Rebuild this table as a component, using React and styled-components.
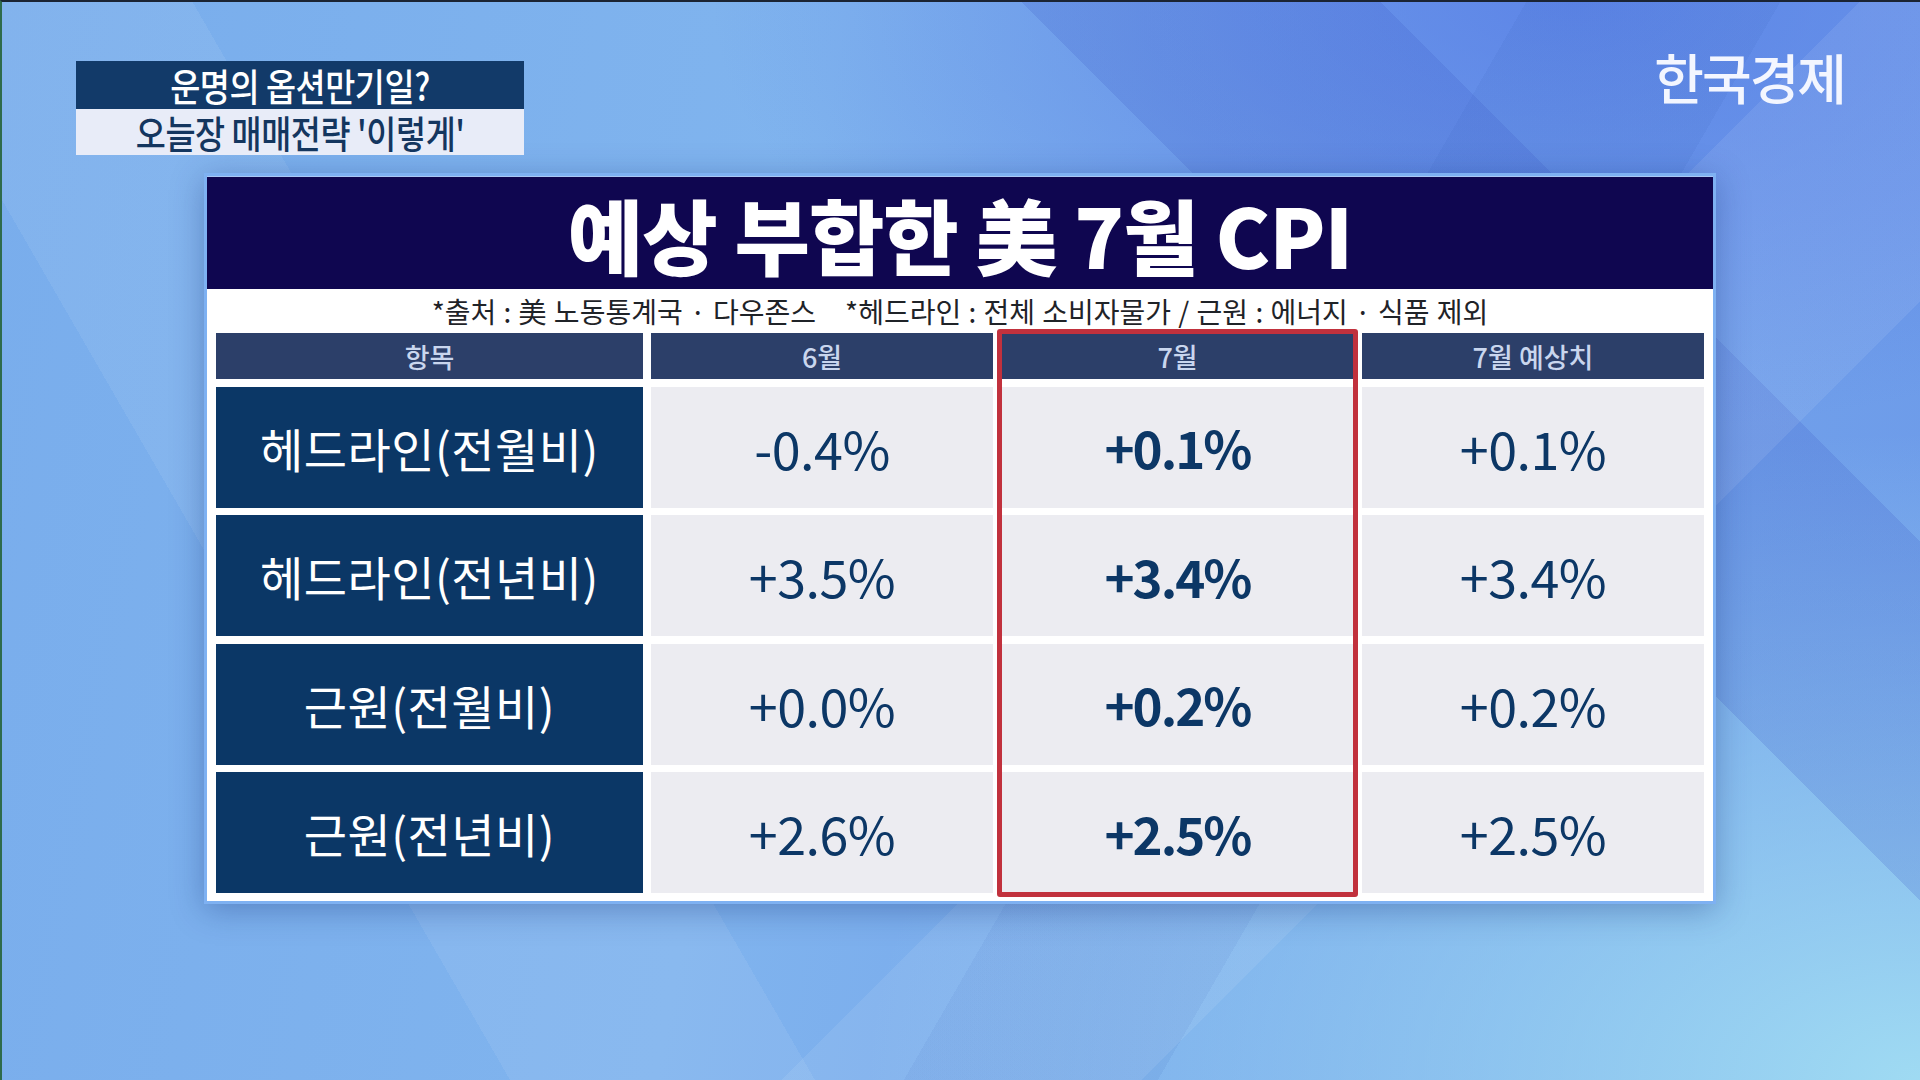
import React from "react";
import styled, { createGlobalStyle } from "styled-components";

const GlobalStyle = createGlobalStyle`
  html, body {
    margin: 0;
    padding: 0;
  }
  body {
    font-family: "Noto Sans CJK KR", "Noto Sans", sans-serif;
  }
`;

const Page = styled.div`
  box-sizing: border-box;
  width: 1920px;
  height: 1080px;
  overflow: hidden;
  padding-top: 59px;
  border-top: 2px solid #1b2433;
  border-left: 2px solid #2e6b4c;
  background:
    linear-gradient(135deg, transparent 0 62%, rgba(255, 255, 255, 0.08) 62% 74%, transparent 74%),
    linear-gradient(225deg, transparent 0 18%, rgba(60, 90, 200, 0.2) 18% 30%, transparent 30%),
    linear-gradient(60deg, transparent 0 20%, rgba(255, 255, 255, 0.07) 20% 32%, transparent 32%),
    linear-gradient(300deg, transparent 0 30%, rgba(40, 80, 170, 0.08) 30% 40%, transparent 40%),
    radial-gradient(ellipse 55% 60% at 100% 100%, rgba(162, 222, 243, 0.95), rgba(162, 222, 243, 0) 100%),
    radial-gradient(ellipse 45% 40% at 82% 0%, rgba(88, 126, 230, 0.8), rgba(88, 126, 230, 0) 100%),
    linear-gradient(100deg, #79adec 0%, #80b4ee 40%, #78a9ec 62%, #6c9ae9 100%);
`;

const TopBar = styled.div`
  display: flex;
  justify-content: space-between;
  align-items: flex-start;
  padding: 0 75px 0 74px;
`;

const Headline = styled.div`
  display: flex;
  flex-direction: column;
  width: 448px;
`;

const HeadlineRow = styled.div`
  height: ${(p) => p.$h}px;
  display: flex;
  align-items: center;
  justify-content: center;
  background: ${(p) => (p.$dark ? "#123a69" : "#e8ecf8")};
  color: ${(p) => (p.$dark ? "#ffffff" : "#14365f")};
  font-size: 38px;
  font-weight: 500;
  line-height: 1;
  white-space: nowrap;
`;

const Squeeze = styled.span`
  display: inline-block;
  transform: scaleX(0.86);
  letter-spacing: -0.5px;
`;

const Logo = styled.div`
  margin-top: -19px;
  color: #f3f6ff;
  font-size: 54px;
  font-weight: 500;
  letter-spacing: -2px;
  line-height: 1.3;
`;

const Card = styled.div`
  box-sizing: border-box;
  width: 1512px;
  margin: 18px 0 0 202px;
  border: 3px solid #7eb1f2;
  background: #ffffff;
  padding-bottom: 8px;
  box-shadow: 0 6px 30px rgba(20, 50, 120, 0.35);
`;

const TitleBar = styled.div`
  height: 112px;
  display: flex;
  align-items: center;
  justify-content: center;
  background: #0f0650;
  border-top: 1px solid #a9c8f5;
  color: #ffffff;
  font-size: 82px;
  font-weight: 900;
  letter-spacing: -1px;
`;

const Source = styled.div`
  height: 44px;
  display: flex;
  align-items: center;
  justify-content: center;
  font-size: 28px;
  font-weight: 400;
  color: #1f2328;
  white-space: pre;
  word-spacing: 1px;
`;

const Table = styled.div`
  display: grid;
  grid-template-columns: 427px 342px 1fr 342px;
  grid-template-rows: 46px repeat(4, 121px);
  column-gap: 8px;
  row-gap: 7.5px;
  padding: 0 9px;
`;

const HeadCell = styled.div`
  grid-column: ${(p) => p.$col};
  grid-row: 1;
  display: flex;
  align-items: center;
  justify-content: center;
  background: #2c3f69;
  color: #c9d6ee;
  font-size: 27px;
  font-weight: 500;
`;

const LabelCell = styled.div`
  grid-column: 1;
  grid-row: ${(p) => p.$row};
  display: flex;
  align-items: center;
  justify-content: center;
  background: #0b3766;
  color: #ffffff;
  font-size: 47px;
  font-weight: 400;
  letter-spacing: 0.5px;
`;

const ValueCell = styled.div`
  grid-column: ${(p) => p.$col};
  grid-row: ${(p) => p.$row};
  display: flex;
  align-items: center;
  justify-content: center;
  background: #ececf1;
  color: #0c3766;
  font-size: ${(p) => (p.$bold ? 51 : 52)}px;
  font-weight: ${(p) => (p.$bold ? 700 : 400)};
  letter-spacing: ${(p) => (p.$bold ? "-2px" : "-0.5px")};
`;

const Highlight = styled.div`
  grid-column: 3;
  grid-row: 1 / 6;
  margin: -4px;
  border: 5px solid #c1313d;
  border-radius: 3px;
  z-index: 1;
  pointer-events: none;
`;

const headers = ["항목", "6월", "7월", "7월 예상치"];

const rows = [
  { label: "헤드라인(전월비)", values: ["-0.4%", "+0.1%", "+0.1%"] },
  { label: "헤드라인(전년비)", values: ["+3.5%", "+3.4%", "+3.4%"] },
  { label: "근원(전월비)", values: ["+0.0%", "+0.2%", "+0.2%"] },
  { label: "근원(전년비)", values: ["+2.6%", "+2.5%", "+2.5%"] },
];

const App = () => {
  return (
    <Page>
      <GlobalStyle />
      <TopBar>
        <Headline>
          <HeadlineRow $dark $h={48}>
            <Squeeze>운명의 옵션만기일?</Squeeze>
          </HeadlineRow>
          <HeadlineRow $h={46}>
            <Squeeze>오늘장 매매전략 '이렇게'</Squeeze>
          </HeadlineRow>
        </Headline>
        <Logo>한국경제</Logo>
      </TopBar>
      <Card>
        <TitleBar>예상 부합한 美 7월 CPI</TitleBar>
        <Source>
          {"*출처 : 美 노동통계국 · 다우존스    *헤드라인 : 전체 소비자물가 / 근원 : 에너지 · 식품 제외"}
        </Source>
        <Table>
          {headers.map((h, i) => (
            <HeadCell key={h} $col={i + 1}>
              {h}
            </HeadCell>
          ))}
          {rows.map((r, ri) => (
            <React.Fragment key={r.label}>
              <LabelCell $row={ri + 2}>{r.label}</LabelCell>
              {r.values.map((v, vi) => (
                <ValueCell key={vi} $row={ri + 2} $col={vi + 2} $bold={vi === 1}>
                  {v}
                </ValueCell>
              ))}
            </React.Fragment>
          ))}
          <Highlight />
        </Table>
      </Card>
    </Page>
  );
};

export default App;
